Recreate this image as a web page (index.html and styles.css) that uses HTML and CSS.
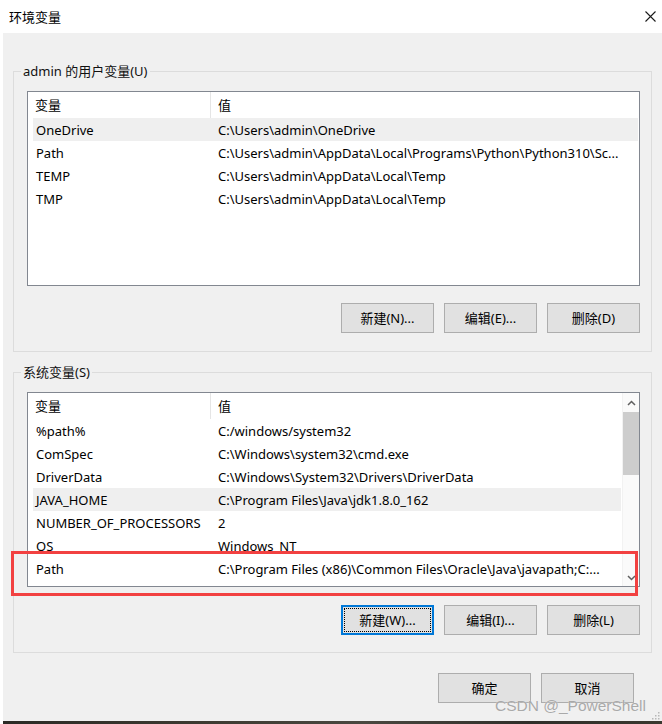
FILE: index.html
```html
<!DOCTYPE html>
<html lang="zh-CN">
<head>
<meta charset="utf-8">
<title>环境变量</title>
<link rel="stylesheet" href="styles.css">
</head>
<body>
<div class="screen">
  <div class="titlebar">
    <span class="title">环境变量</span>
    <svg class="close" width="11" height="11" viewBox="0 0 11 11"><path d="M0.5 0.5 L10.5 10.5 M10.5 0.5 L0.5 10.5" stroke="#1a1a1a" stroke-width="1.1" fill="none"/></svg>
  </div>
  <div class="client">
    <fieldset class="group">
      <legend class="group-label">admin 的用户变量(U)</legend>
      <div class="list">
        <div class="rows">
          <div class="row head"><div class="cell name">变量</div><div class="cell value">值</div></div>
          <div class="row sel"><div class="cell name">OneDrive</div><div class="cell value">C:\Users\admin\OneDrive</div></div>
          <div class="row"><div class="cell name">Path</div><div class="cell value">C:\Users\admin\AppData\Local\Programs\Python\Python310\Sc...</div></div>
          <div class="row"><div class="cell name">TEMP</div><div class="cell value">C:\Users\admin\AppData\Local\Temp</div></div>
          <div class="row"><div class="cell name">TMP</div><div class="cell value">C:\Users\admin\AppData\Local\Temp</div></div>
        </div>
      </div>
      <div class="btn-row">
        <button class="btn">新建(N)...</button>
        <button class="btn">编辑(E)...</button>
        <button class="btn">删除(D)</button>
      </div>
    </fieldset>
    <fieldset class="group group-sys">
      <legend class="group-label">系统变量(S)</legend>
      <div class="list list-scroll">
        <div class="rows">
          <div class="row head"><div class="cell name">变量</div><div class="cell value">值</div></div>
          <div class="row"><div class="cell name">%path%</div><div class="cell value">C:/windows/system32</div></div>
          <div class="row"><div class="cell name">ComSpec</div><div class="cell value">C:\Windows\system32\cmd.exe</div></div>
          <div class="row"><div class="cell name">DriverData</div><div class="cell value">C:\Windows\System32\Drivers\DriverData</div></div>
          <div class="row sel"><div class="cell name">JAVA_HOME</div><div class="cell value">C:\Program Files\Java\jdk1.8.0_162</div></div>
          <div class="row"><div class="cell name">NUMBER_OF_PROCESSORS</div><div class="cell value">2</div></div>
          <div class="row"><div class="cell name">OS</div><div class="cell value">Windows_NT</div></div>
          <div class="row"><div class="cell name">Path</div><div class="cell value">C:\Program Files (x86)\Common Files\Oracle\Java\javapath;C:...</div></div>
        </div>
        <div class="scrollbar">
          <div class="sb-arrow sb-up"><svg width="9" height="6" viewBox="0 0 9 6"><path d="M1 5 L4.5 1.5 L8 5" stroke="#606060" stroke-width="1.5" fill="none"/></svg></div>
          <div class="sb-thumb"></div>
          <div class="sb-track"></div>
          <div class="sb-arrow sb-down"><svg width="9" height="6" viewBox="0 0 9 6"><path d="M1 1 L4.5 4.5 L8 1" stroke="#606060" stroke-width="1.5" fill="none"/></svg></div>
        </div>
      </div>
      <div class="btn-row">
        <button class="btn btn-focus">新建(W)...</button>
        <button class="btn">编辑(I)...</button>
        <button class="btn">删除(L)</button>
      </div>
    </fieldset>
    <div class="dialog-buttons">
      <button class="btn">确定</button>
      <button class="btn">取消</button>
    </div>
  </div>
  <div class="desktop-strip"></div>
  <div class="mark-box"></div>
  <div class="watermark">CSDN @_PowerShell</div>
  <svg class="grip" width="10" height="10" viewBox="0 0 10 10">
    <rect x="8" y="2" width="1.5" height="1.5" fill="#b8b8b8"/>
    <rect x="5" y="5" width="1.5" height="1.5" fill="#b8b8b8"/>
    <rect x="8" y="5" width="1.5" height="1.5" fill="#b8b8b8"/>
    <rect x="2" y="8" width="1.5" height="1.5" fill="#b8b8b8"/>
    <rect x="5" y="8" width="1.5" height="1.5" fill="#b8b8b8"/>
    <rect x="8" y="8" width="1.5" height="1.5" fill="#b8b8b8"/>
  </svg>
</div>
</body>
</html>
```

FILE: styles.css
```css
* { box-sizing: border-box; }

html, body {
  margin: 0;
  padding: 0;
  background: #ffffff;
  overflow: hidden;
}

body {
  font-family: "Noto Sans", "Noto Sans CJK SC", sans-serif;
  font-size: 13px;
  color: #000;
}

.screen {
  position: relative;
  width: 662px;
  height: 724px;
  background: #ffffff;
  overflow: hidden;
}

.titlebar {
  height: 33px;
  display: flex;
  align-items: center;
  padding-left: 9px;
  padding-right: 6px;
  background: #ffffff;
}

.title {
  font-size: 13px;
  line-height: 16px;
  padding-top: 1px;
}

.close {
  margin-left: auto;
  display: block;
}

.client {
  margin-left: 3px;
  height: 688px;
  background: #f0f0f0;
  display: flow-root;
}

.group {
  margin: 30px 10px 0 10px;
  padding: 0 11px 18px 13px;
  border: 1px solid #dcdcdc;
  min-width: 0;
}

.group-sys {
  margin-top: 12px;
  padding-bottom: 17px;
}

.group-label {
  margin-left: -6px;
  padding: 0 2px;
  line-height: 16px;
  font-size: 13px;
  color: #111;
}

.list {
  margin-top: 12px;
  height: 195px;
  border: 1px solid #828790;
  background: #ffffff;
  display: flex;
  overflow: hidden;
}

.rows {
  flex: 1;
  min-width: 0;
  overflow: hidden;
}

.row {
  display: grid;
  grid-template-columns: 178px 1fr;
  height: 23px;
  line-height: 24px;
  margin: 0 1px 0 5px;
  white-space: nowrap;
}

.row.head {
  height: 26px;
  line-height: 27px;
}

.row.sel {
  background: #efefef;
}

.cell {
  overflow: hidden;
}

.cell.name {
  padding-left: 3px;
}

.cell.value {
  padding-left: 7px;
}

.head .cell.name {
  border-right: 1px solid #e5e5e5;
  padding-left: 2px;
}

.head .cell.value {
  padding-left: 7px;
}

.list-scroll .row {
  margin-right: 1px;
}

.scrollbar {
  width: 17px;
  flex: 0 0 17px;
  display: flex;
  flex-direction: column;
  background: #fafafa;
  border-left: 1px solid #f2f2f2;
}

.sb-arrow {
  height: 17px;
  display: flex;
  align-items: center;
  justify-content: center;
}

.sb-up {
  padding-top: 3px;
}

.sb-thumb {
  margin: 2px 0 0 0;
  height: 63px;
  background: #cdcdcd;
}

.sb-track {
  flex: 1;
}

.btn-row {
  display: flex;
  justify-content: flex-end;
  gap: 10px;
  margin-top: 17px;
}

.group-sys .btn-row {
  margin-top: 18px;
}

.btn {
  width: 93px;
  height: 30px;
  margin: 0;
  padding: 0;
  background: #e1e1e1;
  border: 1px solid #adadad;
  font-family: "Noto Sans", "Noto Sans CJK SC", sans-serif;
  font-size: 13px;
  line-height: 16px;
  color: #000;
  text-align: center;
}

.btn-focus {
  border-color: #0078d7;
  box-shadow: inset 0 0 0 1px #0078d7;
  outline: 1px dotted #000;
  outline-offset: -4px;
}

.dialog-buttons {
  display: flex;
  justify-content: flex-end;
  gap: 10px;
  margin-top: 20px;
  padding-right: 28px;
}

.desktop-strip {
  margin-left: 3px;
  height: 3px;
  background: linear-gradient(90deg, #2b2a25 0%, #3d3a31 30%, #4a4840 55%, #2f2e29 80%, #3a382f 100%);
}

.mark-box {
  position: absolute;
  left: 11px;
  top: 551px;
  width: 627px;
  height: 45px;
  border: 3px solid #f24141;
}

.watermark {
  position: absolute;
  left: 495px;
  top: 698px;
  font-family: "Liberation Sans", Arial, sans-serif;
  font-size: 15.5px;
  line-height: 16px;
  color: #a9a9a9;
  text-shadow: 0 0 1px rgba(255, 255, 255, 0.8);
  white-space: nowrap;
}

.grip {
  position: absolute;
  right: 2px;
  bottom: 4px;
}
```
